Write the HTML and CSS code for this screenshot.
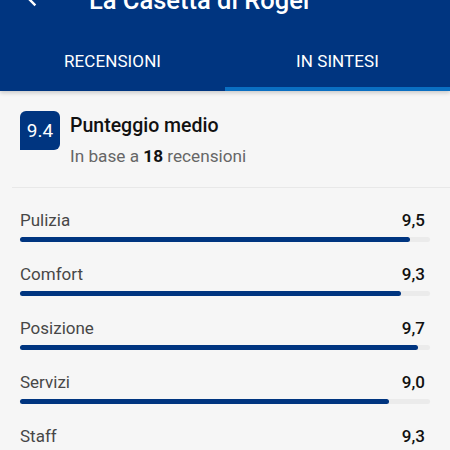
FILE: index.html
```html
<!DOCTYPE html>
<html lang="it">
<head>
<meta charset="utf-8">
<link rel="stylesheet" href="styles.css">
</head>
<body>
<div class="app">
  <header class="header">
    <div class="toolbar">
      <svg class="back" viewBox="0 0 24 24" width="29" height="29"><path fill="#fff" d="M20 11H7.83l5.59-5.59L12 4l-8 8 8 8 1.41-1.41L7.83 13H20v-2z"/></svg>
      <h1 class="title">La Casetta di Roger</h1>
    </div>
    <nav class="tabs">
      <div class="tab">RECENSIONI</div>
      <div class="tab active">IN SINTESI</div>
    </nav>
  </header>
  <main class="content">
    <section class="summary">
      <div class="badge">9.4</div>
      <div class="summary-text">
        <div class="summary-title">Punteggio medio</div>
        <div class="summary-sub">In base a <b>18</b> recensioni</div>
      </div>
    </section>
    <hr class="divider">
    <section class="scores">
      <div class="row">
        <div class="row-head"><span class="label">Pulizia</span><span class="value">9,5</span></div>
        <div class="track"><div class="fill" style="width:95%"></div></div>
      </div>
      <div class="row">
        <div class="row-head"><span class="label">Comfort</span><span class="value">9,3</span></div>
        <div class="track"><div class="fill" style="width:93%"></div></div>
      </div>
      <div class="row">
        <div class="row-head"><span class="label">Posizione</span><span class="value">9,7</span></div>
        <div class="track"><div class="fill" style="width:97%"></div></div>
      </div>
      <div class="row">
        <div class="row-head"><span class="label">Servizi</span><span class="value">9,0</span></div>
        <div class="track"><div class="fill" style="width:90%"></div></div>
      </div>
      <div class="row">
        <div class="row-head"><span class="label">Staff</span><span class="value">9,3</span></div>
        <div class="track"><div class="fill" style="width:93%"></div></div>
      </div>
    </section>
  </main>
</div>
</body>
</html>
```
FILE: styles.css
```css
html, body {
  margin: 0;
  padding: 0;
  background: #f6f6f6;
  font-family: Roboto, "Liberation Sans", sans-serif;
  overflow: hidden;
  height: 450px;
}
.app {
  width: 450px;
}
.header {
  margin-top: -34px;
  background: #003580;
  color: #fff;
  box-shadow: 0 2px 4px rgba(0, 0, 0, 0.18);
  position: relative;
  z-index: 1;
}
.toolbar {
  height: 67px;
  display: flex;
  align-items: center;
  padding-left: 20px;
}
.back {
  flex: none;
  margin-top: -7px;
}
.title {
  margin: 0 0 0 40px;
  font-size: 25.5px;
  font-weight: 500;
  line-height: 30px;
  white-space: nowrap;
}
.tabs {
  display: flex;
  height: 58px;
}
.tab {
  flex: 1;
  display: flex;
  align-items: center;
  justify-content: center;
  font-size: 17px;
  font-weight: 400;
  letter-spacing: 0.1px;
  padding-bottom: 2px;
  box-sizing: border-box;
}
.tab.active {
  box-shadow: inset 0 -4px 0 #0a6fc2;
}
.content {
  background: #f6f6f6;
}
.summary {
  display: flex;
  gap: 10px;
  padding: 20px 20px 0;
}
.badge {
  flex: none;
  width: 40px;
  height: 39px;
  background: #003580;
  color: #fff;
  border-radius: 6px 6px 6px 0;
  display: flex;
  align-items: center;
  justify-content: center;
  font-size: 19px;
}
.summary-text {
  padding-top: 3px;
}
.summary-title {
  font-size: 19.5px;
  font-weight: 500;
  line-height: 24px;
  color: #111;
}
.summary-sub {
  margin-top: 7px;
  font-size: 17.2px;
  line-height: 22px;
  color: #666;
}
.summary-sub b {
  color: #111;
  font-weight: 700;
}
.divider {
  margin: 20px 0 0 12px;
  border: 0;
  border-top: 1px solid #e8e8e8;
  height: 0;
}
.scores {
  padding: 0 20px;
}
.row {
  padding-top: 22px;
}
.row-head {
  display: flex;
  justify-content: space-between;
  line-height: 20px;
  font-size: 17px;
}
.label {
  color: #474747;
}
.value {
  color: #111;
  font-weight: 500;
  padding-right: 5px;
}
.track {
  margin-top: 7px;
  height: 5px;
  border-radius: 3px;
  background: #ebebeb;
}
.fill {
  height: 100%;
  border-radius: 3px;
  background: #003580;
}
```
